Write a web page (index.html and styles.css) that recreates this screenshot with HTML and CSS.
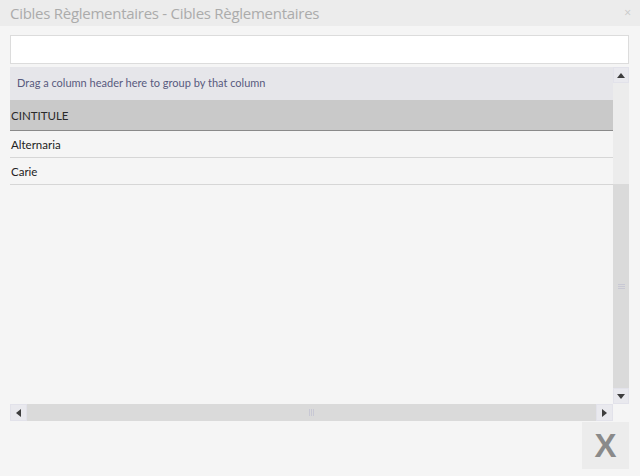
FILE: index.html
```html
<!DOCTYPE html>
<html lang="fr">
<head>
<meta charset="utf-8">
<title>Cibles Règlementaires</title>
<link rel="stylesheet" href="styles.css">
</head>
<body>
<div class="window">
  <div class="titlebar">
    <span class="title">Cibles Règlementaires - Cibles Règlementaires</span>
    <span class="close">×</span>
  </div>
  <div class="content">
    <input class="search" type="text">
    <div class="grid">
      <div class="main">
        <div class="group-panel">Drag a column header here to group by that column</div>
        <div class="header">CINTITULE</div>
        <div class="row">Alternaria</div>
        <div class="row">Carie</div>
      </div>
      <div class="vscroll">
        <div class="sbtn"><span class="tri up"></span></div>
        <div class="vtrack"></div>
        <div class="vthumb"><span class="hgrip"></span></div>
        <div class="sbtn"><span class="tri down"></span></div>
      </div>
      <div class="hscroll">
        <div class="sbtn"><span class="tri left"></span></div>
        <div class="hthumb"><span class="vgrip"></span></div>
        <div class="sbtn"><span class="tri right"></span></div>
      </div>
      <div class="corner"></div>
    </div>
    <div class="footer">
      <div class="xbtn">X</div>
    </div>
  </div>
</div>
</body>
</html>
```
FILE: styles.css
```css
html, body {
  margin: 0;
  padding: 0;
  background: #f5f5f5;
  font-family: "Open Sans", "Noto Sans", sans-serif;
}
.window {
  width: 640px;
  height: 476px;
  background: #f5f5f5;
}
.titlebar {
  height: 26px;
  background: #ececec;
  display: flex;
  align-items: center;
  justify-content: space-between;
  padding: 0 10px 0 10px;
  box-sizing: border-box;
}
.title {
  font-size: 15px;
  color: #ababab;
  letter-spacing: -0.27px;
  line-height: 26px;
}
.close {
  font-size: 12px;
  color: #c9c9c9;
  line-height: 26px;
  margin-right: -1px;
}
.content {
  padding: 9px 11px 0 10px;
}
.search {
  display: block;
  width: 619px;
  height: 29px;
  box-sizing: border-box;
  border: 1px solid #dcdcdc;
  background: #fff;
  margin: 0 0 3px 0;
  padding: 0;
  outline: none;
}
.grid {
  display: grid;
  grid-template-columns: 603px 16px;
  grid-template-rows: 337px 17px;
  width: 619px;
}
.main {
  background: #f5f5f5;
  font-family: "Lato", "Open Sans", sans-serif;
  font-size: 11.5px;
  color: #222;
}
.group-panel {
  height: 33px;
  box-sizing: border-box;
  background: #e6e6ea;
  color: #585a7e;
  display: flex;
  align-items: center;
  padding-left: 7px;
  padding-bottom: 3px;
  font-size: 11px;
}
.header {
  height: 30px;
  background: #c9c9c9;
  border-bottom: 1px solid #8a8a8a;
  display: flex;
  align-items: center;
  padding-left: 1px;
  color: #2a2a2a;
}
.row {
  height: 26px;
  border-bottom: 1px solid #d6d6d6;
  display: flex;
  align-items: center;
  padding-left: 1px;
}
.vscroll {
  display: flex;
  flex-direction: column;
  background: #ececec;
}
.sbtn {
  width: 16px;
  height: 16px;
  flex: none;
  background: #e9e9ee;
  box-shadow: inset 0 0 0 1px #e2e2ea;
  display: flex;
  align-items: center;
  justify-content: center;
}
.hscroll .sbtn {
  width: 17px;
  height: 17px;
}
.vtrack {
  height: 101px;
  background: #ececec;
}
.vthumb {
  flex: 1;
  background: #dadada;
  display: flex;
  align-items: center;
  justify-content: center;
}
.hgrip {
  width: 7px;
  height: 5px;
  border-top: 1px solid #c8c8d4;
  border-bottom: 1px solid #c8c8d4;
  box-sizing: border-box;
  background: linear-gradient(#c8c8d4, #c8c8d4) center / 100% 1px no-repeat;
}
.hscroll {
  display: flex;
  background: #dadada;
}
.hthumb {
  flex: 1;
  background: #dadada;
  display: flex;
  align-items: center;
  justify-content: center;
}
.vgrip {
  width: 5px;
  height: 7px;
  box-sizing: border-box;
  border-left: 1px solid #c8c8d4;
  border-right: 1px solid #c8c8d4;
  background: linear-gradient(#c8c8d4, #c8c8d4) center / 1px 100% no-repeat;
}
.corner {
  background: #f5f5f5;
}
.tri {
  width: 0;
  height: 0;
  border-style: solid;
}
.tri.up {
  border-width: 0 4px 5px 4px;
  border-color: transparent transparent #3e3e3e transparent;
}
.tri.down {
  border-width: 5px 4px 0 4px;
  border-color: #3e3e3e transparent transparent transparent;
}
.tri.left {
  border-width: 4px 5px 4px 0;
  border-color: transparent #3e3e3e transparent transparent;
}
.tri.right {
  border-width: 4px 0 4px 5px;
  border-color: transparent transparent transparent #3e3e3e;
}
.footer {
  display: flex;
  justify-content: flex-end;
  padding-top: 1px;
}
.xbtn {
  width: 47px;
  height: 47px;
  background: #ececec;
  color: #8a8a8a;
  font-family: "Liberation Sans", Arial, sans-serif;
  font-weight: bold;
  font-size: 33px;
  display: flex;
  align-items: center;
  justify-content: center;
  line-height: 1;
}
```
